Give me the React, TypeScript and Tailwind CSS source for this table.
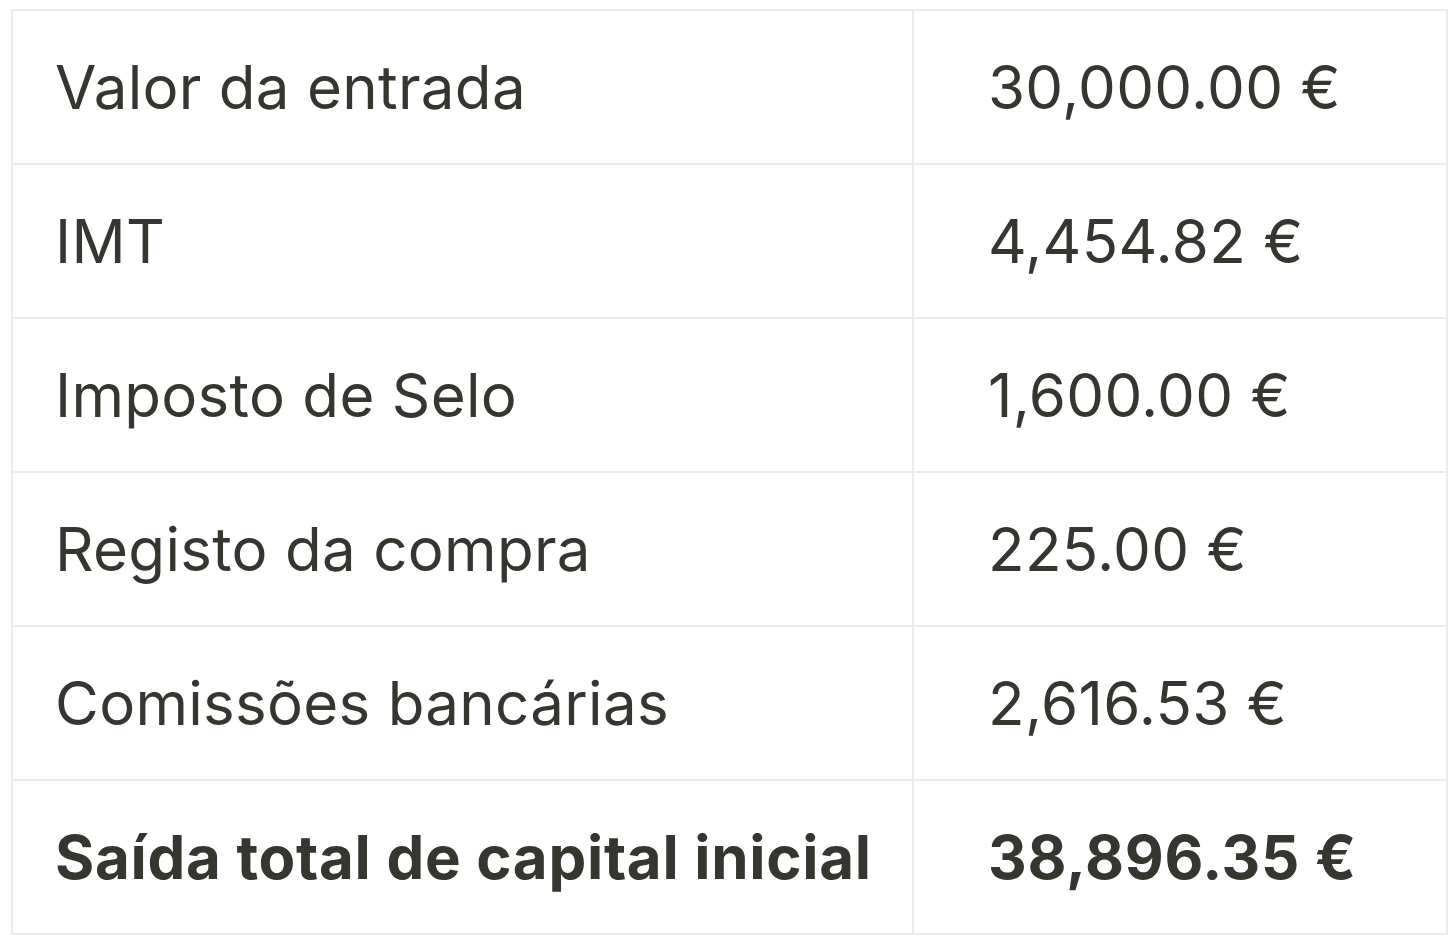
import React from 'react';

const rows: { label: string; value: string; total?: boolean }[] = [
  { label: 'Valor da entrada', value: '30,000.00 €' },
  { label: 'IMT', value: '4,454.82 €' },
  { label: 'Imposto de Selo', value: '1,600.00 €' },
  { label: 'Registo da compra', value: '225.00 €' },
  { label: 'Comissões bancárias', value: '2,616.53 €' },
  { label: 'Saída total de capital inicial', value: '38,896.35 €', total: true },
];

const App: React.FC = () => {
  return (
    <div className="min-h-[946px] w-[1456px] bg-white pt-[9px] pl-[11px] font-['Inter',sans-serif] text-[#37352f]">
      <table className="w-[1437px] border-collapse">
        <tbody>
          {rows.map((r) => (
            <tr key={r.label} className="h-[154px]">
              <td className={`w-[901px] border-2 border-[#ebebea] pl-[42px] text-[60px] ${r.total ? 'font-bold tracking-[0.7px]' : 'font-normal tracking-[0.3px]'}`}>
                {r.label}
              </td>
              <td className={`border-2 border-[#ebebea] pl-[74px] text-[60px] ${r.total ? 'font-bold tracking-[0.7px]' : 'font-normal tracking-[0.3px]'}`}>
                {r.value}
              </td>
            </tr>
          ))}
        </tbody>
      </table>
    </div>
  );
};

export default App;
